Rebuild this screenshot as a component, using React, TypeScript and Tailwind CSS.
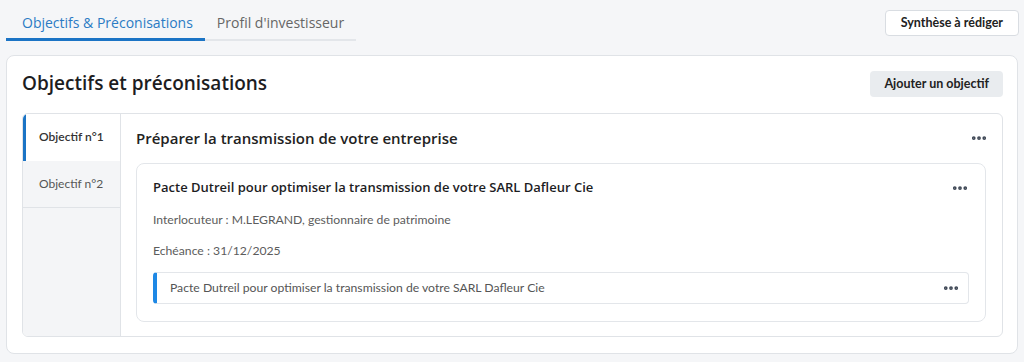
import { MoreHorizontal } from "lucide-react";

const heading = "font-['Open_Sans',sans-serif]";
const body = "font-['Lato',sans-serif]";

function Dots({ className = "" }: { className?: string }) {
  return (
    <button type="button" className={`text-[#3d4654] ${className}`} aria-label="Actions">
      <MoreHorizontal className="size-[18px]" strokeWidth={3} />
    </button>
  );
}

export default function App() {
  const tabs = ["Objectif n°1", "Objectif n°2"];

  return (
    <div className={`min-h-[362px] w-[1024px] bg-[#f5f6f8] px-[6px] pt-[10px] ${body}`}>
      <div className="flex items-start justify-between">
        <div className="flex border-b-2 border-[#e3e6ea] pt-[2px]">
          <div className="-mb-[2px] border-b-[3px] border-[#1b74c5] pb-[5px] pl-[16px] pr-[12px] text-[14px] font-medium text-[#2b7bc4]">
            <span className={heading}>Objectifs &amp; Préconisations</span>
          </div>
          <div className={`px-[12px] pb-[5px] text-[14px] text-[#666] ${heading}`}>Profil d'investisseur</div>
        </div>
        <button
          type="button"
          className="mr-[-1px] h-[26px] rounded-[4px] border border-[#d9dde2] bg-white px-[15px] text-[12.5px] font-bold text-[#222]">
          Synthèse à rédiger
        </button>
      </div>

      <section className="mt-[14px] rounded-[8px] border border-[#e0e3e7] bg-white pb-4 pl-[15px] pr-[14px] pt-[13px]">
        <div className="flex items-center justify-between">
          <h1 className={`text-[19px] font-semibold text-[#1d1d1f] ${heading}`}>Objectifs et préconisations</h1>
          <button
            type="button"
            className="mt-[2px] h-[26px] rounded-[4px] bg-[#e9ecef] px-[14px] text-[12.5px] font-bold text-[#222]">
            Ajouter un objectif
          </button>
        </div>

        <div className="mt-[15px] flex h-[224px] overflow-hidden rounded-[6px] border border-[#e0e3e7]">
          <div className="flex w-[98px] flex-col border-r border-[#e0e3e7] bg-[#f4f5f7]">
            {tabs.map((t, i) => (
              <div
                key={t}
                className={
                  i === 0
                    ? "flex h-[47px] items-center border-l-[3px] border-[#1b74c5] bg-white pl-[13px] text-[12px] font-semibold text-[#333]"
                    : "flex h-[47px] items-center border-b border-[#e0e3e7] pl-[16px] text-[12px] text-[#555]"
                }>
                {t}
              </div>
            ))}
          </div>

          <div className="flex-1 pl-[15px] pr-4 pt-[13px]">
            <div className="flex items-center justify-between">
              <h2 className={`text-[15px] font-semibold text-[#222] ${heading}`}>
                Préparer la transmission de votre entreprise
              </h2>
              <Dots className="-mr-[2px]" />
            </div>

            <div className="mt-[14px] rounded-[8px] border border-[#e3e6ea] px-4 pb-[17px] pt-[14px]">
              <div className="flex items-center justify-between">
                <h3 className={`text-[13px] font-semibold text-[#1d1d1f] ${heading}`}>
                  Pacte Dutreil pour optimiser la transmission de votre SARL Dafleur Cie
                </h3>
                <Dots />
              </div>
              <p className="mt-[13px] text-[12.2px] text-[#5c5c5c]">Interlocuteur : M.LEGRAND, gestionnaire de patrimoine</p>
              <p className="mt-[13px] text-[12.2px] text-[#5c5c5c]">Echéance : 31/12/2025</p>
              <div className="mt-[12px] flex h-[32px] items-center justify-between rounded-[4px] border border-l-[4px] border-[#e3e6ea] border-l-[#1e88e5] pl-[13px] pr-2">
                <span className="text-[12.2px] text-[#555]">
                  Pacte Dutreil pour optimiser la transmission de votre SARL Dafleur Cie
                </span>
                <Dots />
              </div>
            </div>
          </div>
        </div>
      </section>
    </div>
  );
}
